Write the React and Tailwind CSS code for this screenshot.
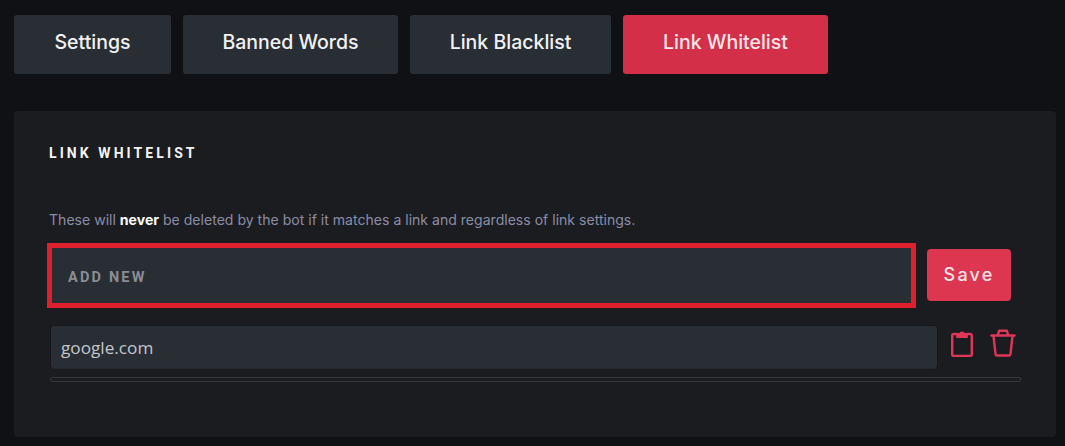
import React from "react";

function Tab({ label, w, active }) {
  return (
    <button className={`h-[59px] pb-[3px] rounded-[3px] flex items-center justify-center text-[19.500px] font-medium ${w} ${active ? "bg-[#d42f48] text-[#fbe6ea]" : "bg-[#292e35] text-[#f1f2f4]"}`}>
      {label}
    </button>
  );
}

function ClipboardIcon() {
  return (
    <svg width="22" height="28" viewBox="0 0 22 28" fill="none" stroke="#e03659" strokeWidth="2.400" strokeLinejoin="round" strokeLinecap="round">
      <path d="M6 5H2.800A1.600 1.600 0 0 0 1.200 6.600v18.800A1.600 1.600 0 0 0 2.800 27h16.400a1.600 1.600 0 0 0 1.600-1.600V6.600A1.600 1.600 0 0 0 19.200 5H16" />
      <path d="M6 8V5h2.800a2.300 2.300 0 0 1 4.400 0H16v3z" fill="#e03659" strokeWidth="1.800" />
    </svg>
  );
}

function TrashIcon() {
  return (
    <svg width="26" height="28" viewBox="0 0 26 28" fill="none" stroke="#e03659" strokeWidth="2.400" strokeLinejoin="round" strokeLinecap="round">
      <path d="M1.500 6.500h23" />
      <path d="M8 6 9 1.800h8l1 4.200" />
      <path d="M3.500 7l2 18A1.800 1.800 0 0 0 7.300 26.500h11.400a1.800 1.800 0 0 0 1.800-1.500l2-18" />
    </svg>
  );
}

export default function App() {
  return (
    <div className="w-[1065px] h-[446px] overflow-hidden bg-[#0f1115] pt-[15px] px-[14px] font-['Inter',sans-serif]">
      <div className="flex gap-3">
        <Tab label="Settings" w="w-[157px]" />
        <Tab label="Banned Words" w="w-[215px]" />
        <Tab label="Link Blacklist" w="w-[201px]" />
        <Tab label="Link Whitelist" w="w-[205px]" active />
      </div>

      <div className="mt-[37px] w-[1042px] h-[326px] rounded-[4px] bg-[#1a1c20] pt-[33px] pl-[35px] pr-[35px]">
        <h2 className="text-[14px] leading-[18px] font-bold tracking-[0.22em] text-[#f2f3f5] font-['Roboto',sans-serif]">LINK WHITELIST</h2>

        <p className="mt-[49px] text-[14.070px] leading-[18px] text-[#8a8da6]">
          These will <strong className="font-bold text-white">never</strong> be deleted by the bot if it matches a link and regardless of link settings.
        </p>

        <div className="mt-[14px] -ml-[2px] flex items-center gap-[11px]">
          <div className="w-[869px] h-[65px] border-[5px] border-[#de1f2d] bg-[#292e35] flex items-center pl-[16px] pt-[4px]">
            <span className="text-[14.500px] font-bold tracking-[0.15em] text-[#8b8d93] font-['Roboto',sans-serif]">ADD NEW</span>
          </div>
          <button className="w-[84px] h-[52px] mb-[2px] rounded-[4px] bg-[#dd3650] text-[#fbe3e7] text-[18px] font-medium tracking-[0.12em]">Save</button>
        </div>

        <div className="mt-[17px] ml-[1px] flex items-center">
          <div className="w-[888px] h-[44px] rounded-[4px] bg-[#292e35] border border-[#16171b] border-b-[#24272c] flex items-center pl-[10px] pt-[2px] text-[#c4c6ca] text-[17.200px] font-['Open_Sans',sans-serif]">
            google.com
          </div>
          <div className="ml-[13px] mb-[8px] flex items-center gap-[17px]">
            <ClipboardIcon />
            <TrashIcon />
          </div>
        </div>

        <div className="mt-[8px] ml-[1px] w-[971px] h-[5px] rounded-[2px] border border-[#35373d] bg-[#1a1c20]" />
      </div>
    </div>
  );
}
